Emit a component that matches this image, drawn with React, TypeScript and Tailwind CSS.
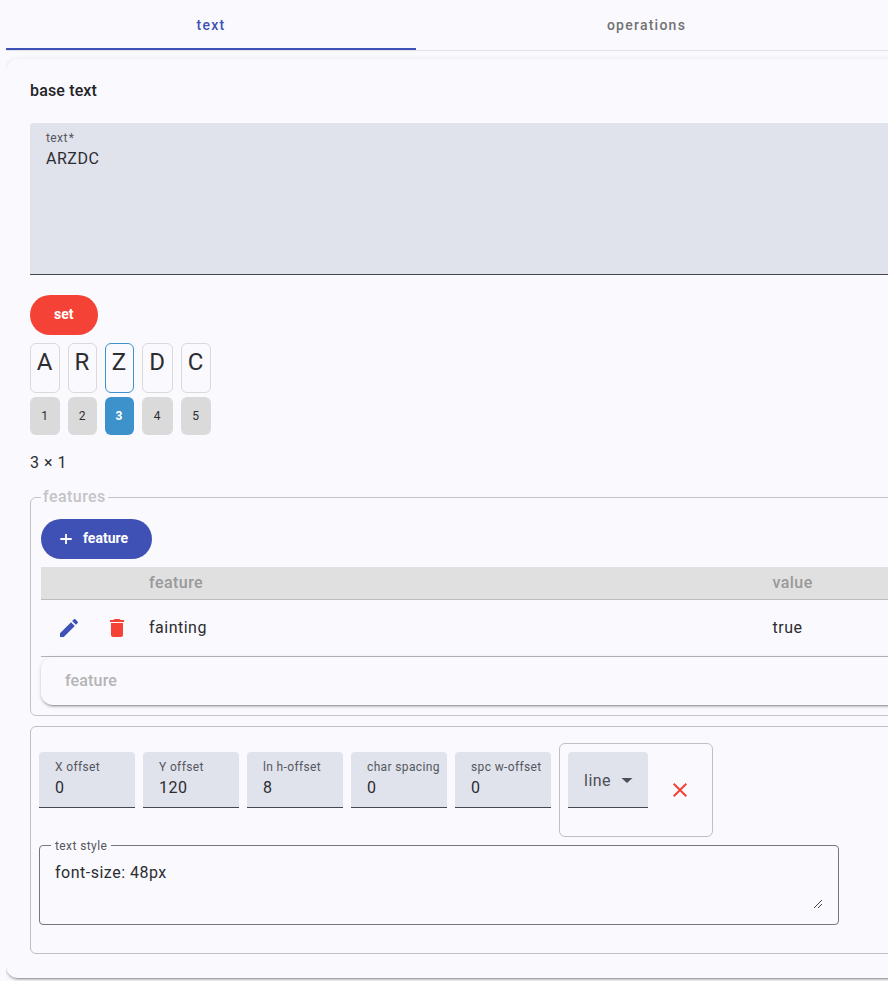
import { ReactNode } from "react";
import { MdArrowDropDown, MdClose, MdDelete, MdEdit } from "react-icons/md";

const glyphs = [
  { char: "A", box: "w-[30px]" },
  { char: "R", box: "w-[29px]" },
  { char: "Z", box: "w-[29px]" },
  { char: "D", box: "w-[31px]" },
  { char: "C", box: "w-[30px]" },
];

const offsets = [
  { label: "X offset", value: "0" },
  { label: "Y offset", value: "120" },
  { label: "ln h-offset", value: "8" },
  { label: "char spacing", value: "0" },
  { label: "spc w-offset", value: "0" },
];

const elevation =
  "shadow-[0_3px_1px_-2px_rgba(0,0,0,0.2),0_2px_2px_0_rgba(0,0,0,0.14),0_1px_5px_0_rgba(0,0,0,0.12)]";

function Tab({ children, className }: { children: ReactNode; className: string }) {
  return (
    <div className={`flex shrink-0 items-center justify-center text-sm font-medium tracking-[1.25px] ${className}`}>
      {children}
    </div>
  );
}

function NumberField({ label, value }: { label: string; value: string }) {
  return (
    <div className="h-14 w-24 shrink-0 whitespace-nowrap rounded-t border-b border-[#44474e] bg-[#e0e2ec] pl-4 pt-[7px]">
      <div className="text-xs leading-4 tracking-[0.36px] text-[#54575e]">{label}</div>
      <div className="mt-px text-base leading-6 tracking-[0.5px] text-[#2c2d31]">{value}</div>
    </div>
  );
}

export default function App() {
  return (
    <div className="h-[981px] w-full overflow-hidden bg-[#faf9fd] pl-1.5 font-[Roboto,sans-serif] text-base leading-6 text-[#2c2d31]">
      <div className="h-full w-[1000px] overflow-hidden">
        <div className="flex h-[51px] border-b border-[#e0e2ec]">
          <Tab className="w-[410px] border-b-2 border-[#3f51b5] pt-0.5 text-[#3f51b5]">text</Tab>
          <Tab className="w-[461px] text-[#727274]">operations</Tab>
        </div>

        <div className={`mt-2 h-[919px] rounded-xl bg-[#faf9fd] px-6 pt-5 ${elevation}`}>
          <h2 className="text-base font-medium leading-6 tracking-[0.15px] text-[#222327]">base text</h2>

          <div className="mt-5 h-[152px] rounded-t border-b border-[#44474e] bg-[#e0e2ec] px-4 pt-[7px]">
            <div className="text-xs leading-4 tracking-[0.4px] text-[#54575e]">
              text<span className="ml-px">*</span>
            </div>
            <div className="mt-px tracking-[0.5px]">ARZDC</div>
          </div>

          <button className="mt-5 block h-10 rounded-full bg-[#f44336] px-6 pb-0.5 text-sm font-bold text-white">
            set
          </button>

          <div className="mt-2 flex gap-2">
            {glyphs.map(({ char, box }, i) => {
              const on = i === 2;
              return (
                <div key={char} className={`${box} text-center`}>
                  <div
                    className={`h-[50px] rounded-md border pr-px pt-0.5 text-2xl leading-8 ${on ? "border-[#3d92cc]" : "border-[#dadada]"}`}
                  >
                    {char}
                  </div>
                  <div
                    className={`mt-1 h-[38px] rounded-md pr-px text-xs leading-[38px] ${on ? "bg-[#3d92cc] font-bold text-white" : "bg-[#dadada]"}`}
                  >
                    {i + 1}
                  </div>
                </div>
              );
            })}
          </div>

          <p className="mt-4 tracking-[0.5px]">3 × 1</p>

          <fieldset className="mt-[10px] h-[231px] rounded-md border border-[#c4c4c6] px-2.5">
            <legend className="px-0.5 font-medium leading-6 tracking-[0.45px] text-[#c4c4c6]">features</legend>
            <button className="mt-2.5 flex h-10 items-center rounded-full bg-[#3f51b5] pl-4 pr-6 text-sm font-bold text-white">
              <svg width="18" height="18" viewBox="0 0 18 18" fill="none" stroke="currentColor" strokeWidth="1.8">
                <path d="M3.3 9H14.7M9 4V14" />
              </svg>
              <span className="ml-2 pb-0.5">feature</span>
            </button>
            <div className="mt-2 flex h-[33px] items-center border-b border-[#bdbdbd] bg-[#e0e0e0] pb-px font-medium tracking-[0.45px] text-[#999]">
              <span className="ml-[108px] w-[623.5px]">feature</span>
              <span>value</span>
            </div>
            <div className="flex h-[57px] items-center border-b border-[#b4b4b6] tracking-[0.5px]">
              <MdEdit size={24} className="ml-4 text-[#3f51b5]" />
              <MdDelete size={24} className="ml-6 text-[#f44336]" />
              <span className="ml-5 w-[623.5px]">fainting</span>
              <span>true</span>
            </div>
            <div
              className={`flex h-12 items-center rounded-xl bg-[#faf9fd] px-6 font-medium tracking-[0.15px] text-[#b4b4b6] ${elevation}`}
            >
              feature
            </div>
          </fieldset>

          <section className="mt-2.5 h-[228px] rounded-md border border-[#c0c0c2] px-2 pt-4">
            <div className="flex gap-2">
              <div className="flex gap-2 pt-[9px]">
                {offsets.map((field) => (
                  <NumberField key={field.label} {...field} />
                ))}
              </div>
              <div className="flex h-[94px] w-[154px] rounded-md border border-[#c0c0c2] pl-2 pt-2">
                <div className="flex h-14 w-20 items-center rounded-t border-b border-[#44474e] bg-[#e0e2ec] pl-4 tracking-[0.5px] text-[#4c4f56]">
                  <span className="pt-0.5">line</span>
                  <MdArrowDropDown size={24} className="ml-1 scale-x-110" />
                </div>
                <MdClose size={24} className="ml-5 mt-[26px] text-[#f44336]" />
              </div>
            </div>

            <fieldset className="h-[88px] w-[800px] rounded border border-[#74777f] pl-[11px]">
              <legend className="h-4 px-1 pt-px text-xs leading-4 tracking-[0.4px] text-[#54575e]">text style</legend>
              <div className="flex h-[60px] justify-between pl-1 pr-[15px] pt-2">
                <span className="tracking-[0.5px]">font-size: 48px</span>
                <svg width="10" height="10" viewBox="0 0 10 10" className="mt-[38px]" stroke="#444" strokeWidth="1">
                  <path d="M1 9L9 1M5 9L9 5" />
                </svg>
              </div>
            </fieldset>
          </section>
        </div>
      </div>
    </div>
  );
}
